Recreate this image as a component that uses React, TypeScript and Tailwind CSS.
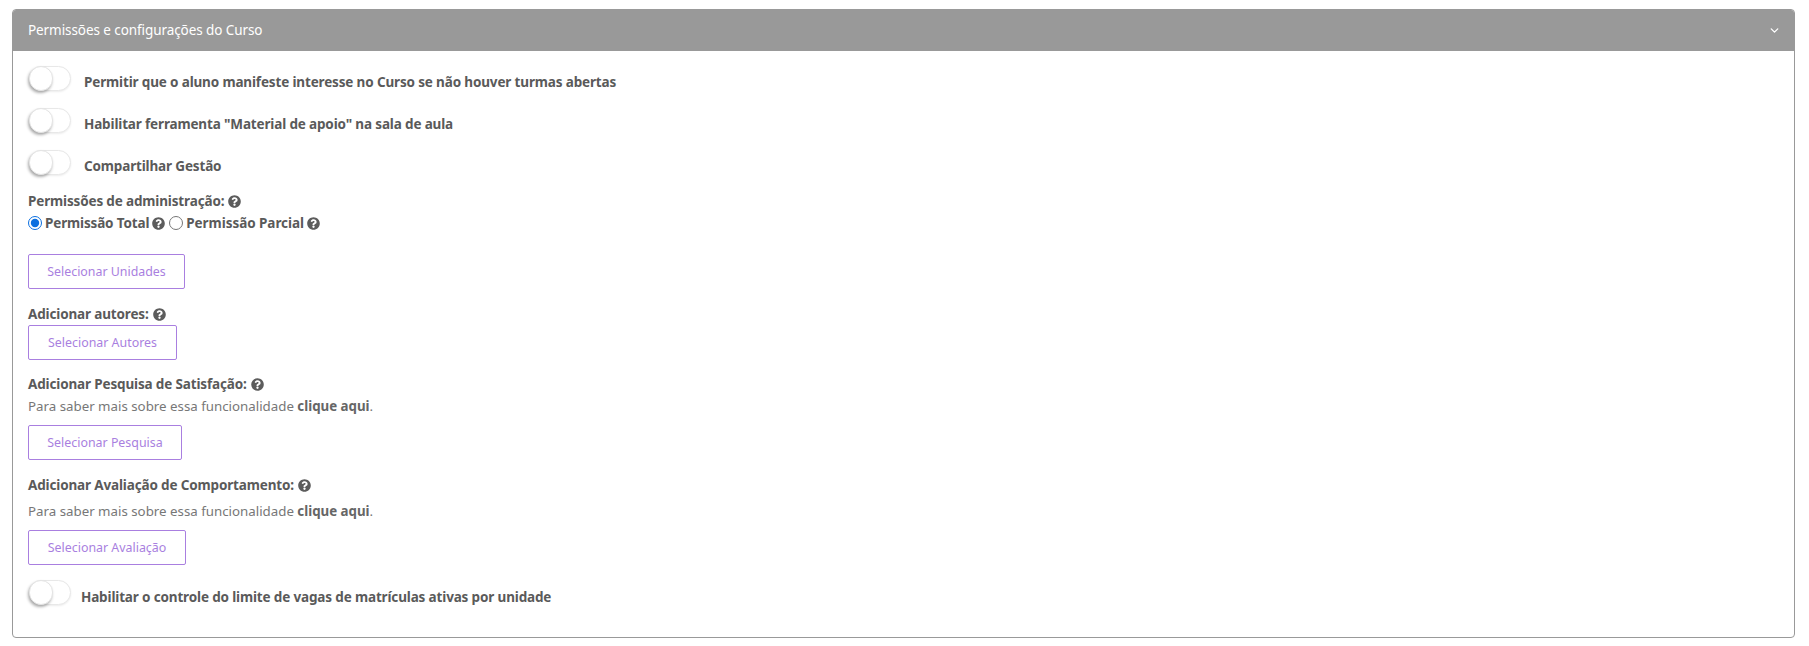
import { ChevronDown } from 'lucide-react'
import { FaQuestionCircle } from 'react-icons/fa'

function Toggle() {
  return (
    <span className="relative ml-[1px] block h-[25px] w-[42px] shrink-0 rounded-full border border-[#e8e8e8] bg-white shadow-[0_1px_2px_rgba(0,0,0,0.08)]">
      <span className="absolute left-[-1px] top-[-1px] h-[25px] w-[24px] rounded-full border border-[#e4e4e4] bg-white shadow-[-1px_2px_3px_rgba(0,0,0,0.3)]" />
    </span>
  )
}

function Help() {
  return <FaQuestionCircle className="inline-block text-[13px] text-[#5c5c5c]" />
}

function ToggleRow({ label, gap = 'gap-[13px]', className = '', textClass = 'pt-[8px]' }: { label: string; gap?: string; className?: string; textClass?: string }) {
  return (
    <div className={`flex h-[25px] items-center ${gap} ${className}`}>
      <Toggle />
      <span className={`${textClass} text-[13.5px] font-bold tracking-[-0.15px]`}>{label}</span>
    </div>
  )
}

function SelectButton({ label, width }: { label: string; width: string }) {
  return (
    <button className={`block h-[35px] ${width} rounded-[2px] border border-[#a97fe0] bg-white pt-[2px] text-center text-[12.4px] text-[#a97fe0]`}>
      {label}
    </button>
  )
}

function Heading({ label, className = '' }: { label: string; className?: string }) {
  return (
    <div className={`flex h-[18px] items-center gap-[4px] text-[13.5px] font-bold tracking-[-0.15px] ${className}`}>
      <span>{label}</span>
      <Help />
    </div>
  )
}

function MoreInfo({ className = '' }: { className?: string }) {
  return (
    <p className={`h-[18px] text-[13.3px] leading-[18px] text-[#777] ${className}`}>
      Para saber mais sobre essa funcionalidade <b className="font-bold text-[#666]">clique aqui</b>.
    </p>
  )
}

export default function App() {
  return (
    <div className="min-h-[646px] bg-white pl-[12px] pr-[14px] pt-[9px] font-['Noto_Sans',sans-serif] text-[#5a5a5a]">
      <section className="h-[629px] overflow-hidden rounded-[4px] border border-[#999]">
        <header className="flex h-[41px] items-center justify-between bg-[#999] pl-[15px] pr-[13px] text-[13.5px] tracking-[-0.08px] text-white">
          <span>Permissões e configurações do Curso</span>
          <ChevronDown size={13} strokeWidth={2.5} />
        </header>
        <div className="pl-[15px] pt-[15px]">
          <ToggleRow label="Permitir que o aluno manifeste interesse no Curso se não houver turmas abertas" />
          <ToggleRow className="mt-[17px]" label={'Habilitar ferramenta "Material de apoio" na sala de aula'} />
          <ToggleRow className="mt-[17px]" label="Compartilhar Gestão" />

          <Heading className="mt-[17px]" label="Permissões de administração:" />
          <div className="mt-[4px] flex h-[18px] items-center text-[13.5px] font-bold tracking-[-0.15px]">
            <input type="radio" defaultChecked className="m-0 h-[14px] w-[14px] accent-[#0b6fe0]" />
            <span className="ml-[3px]">Permissão Total</span>
            <span className="ml-[3px] flex"><Help /></span>
            <input type="radio" className="ml-[4px] h-[14px] w-[14px]" />
            <span className="ml-[3px] tracking-[-0.05px]">Permissão Parcial</span>
            <span className="ml-[3px] flex"><Help /></span>
          </div>

          <div className="mt-[22px]">
            <SelectButton label="Selecionar Unidades" width="w-[157px]" />
          </div>

          <Heading className="mt-[16px]" label="Adicionar autores:" />
          <div className="mt-[2px]">
            <SelectButton label="Selecionar Autores" width="w-[149px]" />
          </div>

          <Heading className="mt-[15px]" label="Adicionar Pesquisa de Satisfação:" />
          <MoreInfo className="mt-[4px]" />
          <div className="mt-[10px]">
            <SelectButton label="Selecionar Pesquisa" width="w-[154px]" />
          </div>

          <Heading className="mt-[16px]" label="Adicionar Avaliação de Comportamento:" />
          <MoreInfo className="mt-[8px]" />
          <div className="mt-[10px]">
            <SelectButton label="Selecionar Avaliação" width="w-[158px]" />
          </div>

          <ToggleRow className="mt-[15px]" gap="gap-[10px]" textClass="pt-[10px]" label="Habilitar o controle do limite de vagas de matrículas ativas por unidade" />
        </div>
      </section>
    </div>
  )
}
